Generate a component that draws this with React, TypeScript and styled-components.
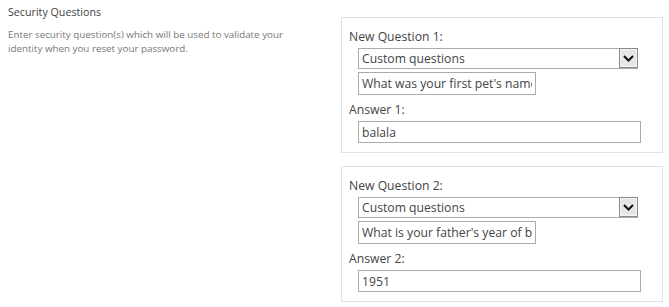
import styled, { createGlobalStyle } from "styled-components";

const GlobalStyle = createGlobalStyle`
  html, body {
    margin: 0;
    padding: 0;
    background: #ffffff;
  }
  body {
    font-family: "Open Sans", "Noto Sans", sans-serif;
  }
`;

const Page = styled.div`
  display: flex;
  flex-direction: row;
  width: 669px;
  height: 307px;
  overflow: hidden;
  background: #fff;
`;

const InfoColumn = styled.div`
  width: 341px;
  flex-shrink: 0;
  padding: 4px 0 0 8px;
  box-sizing: border-box;
`;

const SectionTitle = styled.div`
  font-size: 10.7px;
  line-height: 17px;
  color: #444;
  margin-bottom: 7px;
`;

const SectionHelp = styled.div`
  font-size: 9.8px;
  line-height: 14px;
  color: #777;
  width: 300px;
`;

const FormColumn = styled.div`
  display: flex;
  flex-direction: column;
  gap: 13px;
  padding-top: 17px;
`;

const QuestionCard = styled.div`
  width: 322px;
  height: 136px;
  box-sizing: border-box;
  border: 1px solid #e1e1e1;
  padding: 10px 0 0 7px;
`;

const FieldLabel = styled.div<{ $gap: number }>`
  font-size: 12.2px;
  line-height: 18px;
  color: #444;
  margin-bottom: ${({ $gap }) => $gap}px;
`;

const SelectBox = styled.div`
  width: 280px;
  height: 21px;
  margin: 0 0 3px 9px;
  box-sizing: border-box;
  border: 1px solid #ababab;
  display: flex;
  align-items: stretch;
  background: #fff;
`;

const SelectText = styled.span`
  flex: 1;
  padding-left: 3px;
  font-size: 12.2px;
  line-height: 19px;
  color: #444;
`;

const DropButton = styled.div`
  width: 19px;
  box-sizing: border-box;
  border: 1px solid #8a8a8a;
  margin: -1px -1px 0 0;
  height: 20px;
  background: #e6e6e6;
  display: flex;
  align-items: center;
  justify-content: center;
  box-shadow: inset 0 0 0 1px #f4f4f4;
`;

const TextInput = styled.input<{ $width: number; $height: number; $gap?: number }>`
  display: block;
  width: ${({ $width }) => $width}px;
  height: ${({ $height }) => $height}px;
  margin: 0 0 ${({ $gap }) => $gap ?? 0}px 9px;
  box-sizing: border-box;
  border: 1px solid #ababab;
  border-radius: 0;
  padding: 0 3px;
  font-family: "Open Sans", "Noto Sans", sans-serif;
  font-size: 12.2px;
  color: #444;
  background: #fff;
  outline: none;
`;

interface Question {
  num: number;
  question: string;
  answer: string;
}

const questions: Question[] = [
  { num: 1, question: "What was your first pet's name?", answer: "balala" },
  { num: 2, question: "What is your father's year of birth?", answer: "1951" },
];

const Chevron = () => (
  <svg width="11" height="7" viewBox="0 0 11 7">
    <path d="M1 1 L5.5 5.5 L10 1" fill="none" stroke="#111" strokeWidth="2" />
  </svg>
);

const QuestionBlock = ({ num, question, answer }: Question) => (
  <QuestionCard>
    <FieldLabel $gap={2}>New Question {num}:</FieldLabel>
    <SelectBox>
      <SelectText>Custom questions</SelectText>
      <DropButton>
        <Chevron />
      </DropButton>
    </SelectBox>
    <TextInput $width={178} $height={23} $gap={6} value={question} readOnly />
    <FieldLabel $gap={2}>Answer {num}:</FieldLabel>
    <TextInput $width={283} $height={22} value={answer} readOnly />
  </QuestionCard>
);

export default function App() {
  return (
    <>
      <GlobalStyle />
      <Page>
        <InfoColumn>
          <SectionTitle>Security Questions</SectionTitle>
          <SectionHelp>
            Enter security question(s) which will be used to validate your
            identity when you reset your password.
          </SectionHelp>
        </InfoColumn>
        <FormColumn>
          {questions.map((q) => (
            <QuestionBlock key={q.num} {...q} />
          ))}
        </FormColumn>
      </Page>
    </>
  );
}
